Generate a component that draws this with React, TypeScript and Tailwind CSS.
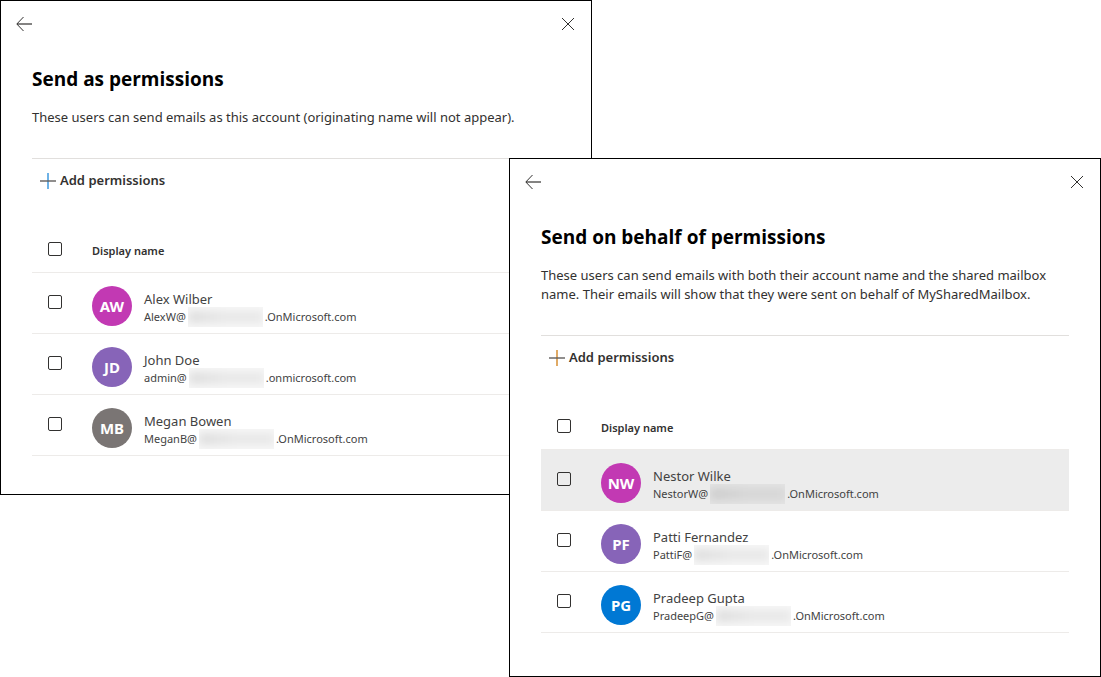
import { useId } from "react";

type User = {
  name: string;
  initials: string;
  color: string;
  account: string;
  domain: string;
  highlighted?: boolean;
};

type PanelProps = {
  title: string;
  description: string;
  users: User[];
  plusStroke: string;
  className: string;
};

const sendAsUsers: User[] = [
  { name: "Alex Wilber", initials: "AW", color: "bg-[#c239b3]", account: "AlexW@", domain: ".OnMicrosoft.com" },
  { name: "John Doe", initials: "JD", color: "bg-[#8764b8]", account: "admin@", domain: ".onmicrosoft.com" },
  { name: "Megan Bowen", initials: "MB", color: "bg-[#7a7574]", account: "MeganB@", domain: ".OnMicrosoft.com" },
];

const sendOnBehalfUsers: User[] = [
  { name: "Nestor Wilke", initials: "NW", color: "bg-[#c239b3]", account: "NestorW@", domain: ".OnMicrosoft.com", highlighted: true },
  { name: "Patti Fernandez", initials: "PF", color: "bg-[#8764b8]", account: "PattiF@", domain: ".OnMicrosoft.com" },
  { name: "Pradeep Gupta", initials: "PG", color: "bg-[#0078d4]", account: "PradeepG@", domain: ".OnMicrosoft.com" },
];

function BackIcon() {
  return (
    <svg width="16" height="16" viewBox="0 0 16 16" fill="none" stroke="#323130">
      <path d="M7.5 1 L0.8 8 L7.5 15" />
      <path d="M1 8 H16" strokeWidth="1.2" />
    </svg>
  );
}

function CloseIcon() {
  return (
    <svg width="14" height="14" viewBox="0 0 14 14" fill="none" stroke="#323130">
      <path d="M1 1 L13 13 M13 1 L1 13" />
    </svg>
  );
}

function PlusIcon({ stroke }: { stroke: string }) {
  return (
    <svg width="16" height="16" viewBox="0 0 16 16" fill="none">
      <path d="M8 0 V16" className={stroke} strokeWidth="1.6" />
      <path d="M0 8 H16" stroke="#605e5c" strokeWidth="1.4" />
    </svg>
  );
}

function Checkbox({ label }: { label: string }) {
  return (
    <input
      type="checkbox"
      aria-label={label}
      className="block size-3.5 appearance-none rounded-xs border border-[#323130] bg-transparent checked:bg-[#0078d4]"
    />
  );
}

// Hidden tenant name between the account and the domain
function Redacted() {
  return (
    <span className="mx-0.5 h-5 w-[75px] shrink-0 overflow-hidden bg-black/3">
      <span className="mt-1 block h-3 bg-linear-to-r from-black/10 via-black/6 to-black/6 blur-xs" />
    </span>
  );
}

function UserRow({ user }: { user: User }) {
  return (
    <tr className={user.highlighted ? "h-[61px] bg-[#ececec]" : "h-[61px]"}>
      <td className="border-b border-[#edebe9] pt-[22px] pl-4 align-top">
        <Checkbox label={user.name} />
      </td>
      <td className="border-b border-[#edebe9] pt-[13px] align-top">
        <div className="flex gap-3">
          <span
            className={`flex size-10 shrink-0 items-center justify-center rounded-full text-[15px] font-bold text-white ${user.color}`}
          >
            {user.initials}
          </span>
          <div className="pt-1 text-[#424242]">
            <p className="text-[13px] leading-[18px]">{user.name}</p>
            <p className="flex h-[18px] items-center text-[11px]">
              <span>{user.account}</span>
              <Redacted />
              <span>{user.domain}</span>
            </p>
          </div>
        </div>
      </td>
    </tr>
  );
}

function PermissionsPanel({ title, description, users, plusStroke, className }: PanelProps) {
  const titleId = useId();

  return (
    <section aria-labelledby={titleId} className={`border border-black bg-white ${className}`}>
      <div className="flex h-[46px] items-center justify-between pr-4 pl-[15px]">
        <button type="button" aria-label="Back">
          <BackIcon />
        </button>
        <button type="button" aria-label="Close">
          <CloseIcon />
        </button>
      </div>
      <div className="px-[31px]">
        <h2 id={titleId} className="mt-[18px] font-['Open_Sans',sans-serif] text-[19px] leading-7 font-bold text-black">
          {title}
        </h2>
        <p className="mt-[15px] text-[13px] leading-[19px] text-[#323130]">{description}</p>
        <div className="mt-[31px] border-t border-[#e1dfdd]">
          <button type="button" className="flex h-11 items-center gap-1 px-2 text-[13px] font-semibold text-[#323130]">
            <PlusIcon stroke={plusStroke} />
            Add permissions
          </button>
        </div>
        <table className="mt-[26px] w-full table-fixed border-separate border-spacing-0">
          <thead>
            <tr className="h-11">
              <th className="w-[60px] border-b border-[#edebe9] pt-[13px] pl-4 align-top">
                <Checkbox label="Select all" />
              </th>
              <th className="border-b border-[#edebe9] pt-0.5 text-left text-[11px] font-semibold text-[#323130]">
                Display name
              </th>
            </tr>
          </thead>
          <tbody>
            {users.map((user) => (
              <UserRow key={user.name} user={user} />
            ))}
          </tbody>
        </table>
      </div>
    </section>
  );
}

export default function App() {
  return (
    <main className="grid grid-cols-[509fr_83fr_509fr] items-start bg-white font-['Noto_Sans','Open_Sans',sans-serif]">
      <PermissionsPanel
        title="Send as permissions"
        description="These users can send emails as this account (originating name will not appear)."
        users={sendAsUsers}
        plusStroke="stroke-[#4a9fe0]"
        className="col-start-1 col-end-3 row-start-1 pb-[38px]"
      />
      <PermissionsPanel
        title="Send on behalf of permissions"
        description="These users can send emails with both their account name and the shared mailbox name. Their emails will show that they were sent on behalf of MySharedMailbox."
        users={sendOnBehalfUsers}
        plusStroke="stroke-[#d9953f]"
        className="col-start-2 col-end-4 row-start-1 mt-[158px] pb-[43px]"
      />
    </main>
  );
}
